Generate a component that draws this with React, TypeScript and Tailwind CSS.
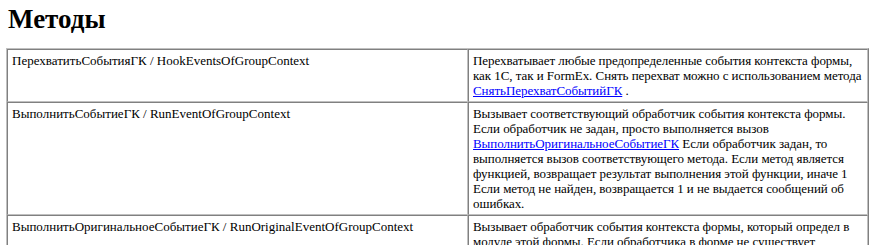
const rows = [
  {
    name: 'ПерехватитьСобытияГК / HookEventsOfGroupContext',
    desc: (
      <>
        Перехватывает любые предопределенные события контекста формы, как 1С, так и FormEx. Снять перехват можно с
        использованием метода <a className="text-[#0000ff] underline">СнятьПерехватСобытийГК</a> .
      </>
    ),
  },
  {
    name: 'ВыполнитьСобытиеГК / RunEventOfGroupContext',
    desc: (
      <>
        Вызывает соответствующий обработчик события контекста формы. Если обработчик не задан, просто выполняется вызов{' '}
        <a className="text-[#0000ff] underline">ВыполнитьОригинальноеСобытиеГК</a> Если обработчик задан, то выполняется
        вызов соответствующего метода. Если метод является функцией, возвращает результат выполнения этой функции, иначе
        1 Если метод не найден, возвращается 1 и не выдается сообщений об ошибках.
      </>
    ),
  },
  {
    name: 'ВыполнитьОригинальноеСобытиеГК / RunOriginalEventOfGroupContext',
    desc: (
      <>
        Вызывает обработчик события контекста формы, который определ в модуле этой формы. Если обработчика в форме не
        существует, вызывается стандартный обработчик.
      </>
    ),
  },
]

export default function App() {
  return (
    <div className="min-h-screen bg-white pl-[6px] pr-[4px] text-black font-['Liberation_Serif','Times_New_Roman',serif]">
      <h1 className="pt-[4px] pb-[14px] pl-[2px] text-[27px] font-bold leading-[30px]">Методы</h1>

      {/* Таблица методов */}
      <table className="w-full border-separate border-spacing-0 border border-t-[#c0c0c0] border-l-[#c0c0c0] border-b-[#808080] border-r-[#808080] text-[13px] leading-[15px]">
        <tbody>
          {rows.map((row) => (
            <tr key={row.name}>
              <td className="w-[461px] align-top border border-t-[#808080] border-l-[#808080] border-b-[#c0c0c0] border-r-[#c0c0c0] px-[4px] py-[3px]">
                {row.name}
              </td>
              <td className="align-top border border-t-[#808080] border-l-[#808080] border-b-[#c0c0c0] border-r-[#c0c0c0] px-[4px] py-[3px] tracking-[-0.05px]">
                {row.desc}
              </td>
            </tr>
          ))}
        </tbody>
      </table>
    </div>
  )
}
